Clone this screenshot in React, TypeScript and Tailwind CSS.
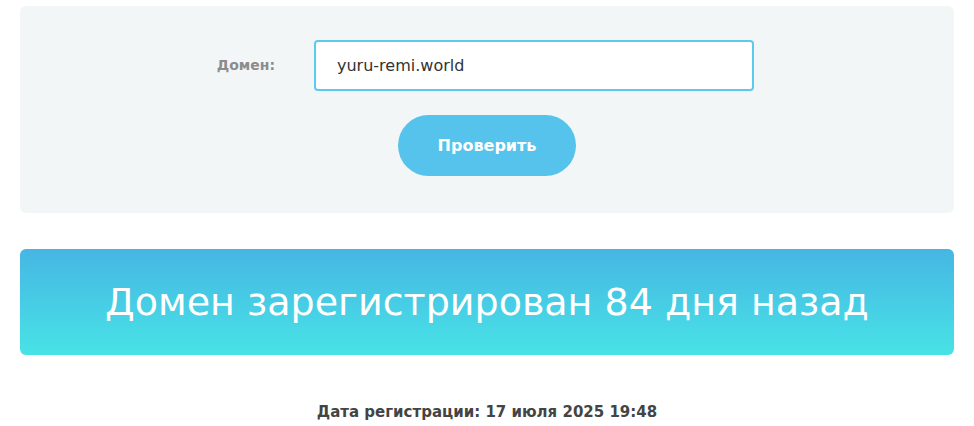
export default function App() {
  return (
    <div className="min-h-screen bg-white px-5 pt-[6px] font-['DejaVu_Sans',sans-serif]">
      <div className="rounded-md bg-[#f3f6f7] pt-[34px] pb-[37px]">
        <div className="flex items-center">
          <label className="w-[294px] pr-[39px] text-right text-[14px] font-semibold text-[#8c8c8c]">
            Домен:
          </label>
          <div className="flex h-[51px] w-[440px] items-center rounded-[4px] border-2 border-[#5cc9ef] bg-white pl-[21px] text-[16px] text-[#333]">
            yuru-remi.world
          </div>
        </div>
        <div className="mt-6 flex justify-center">
          <button className="h-[61px] w-[178px] rounded-full bg-[#55c3ec] text-[16px] font-bold text-white">
            Проверить
          </button>
        </div>
      </div>

      <div className="mt-[36px] flex h-[106px] items-center justify-center rounded-md bg-gradient-to-b from-[#46b6e3] to-[#48e3e6] text-[38px] text-white">
        Домен зарегистрирован 84 дня назад
      </div>

      <div className="mt-[46px] text-center text-[15px] font-bold text-[#444]">
        Дата регистрации: 17 июля 2025 19:48
      </div>
    </div>
  );
}
